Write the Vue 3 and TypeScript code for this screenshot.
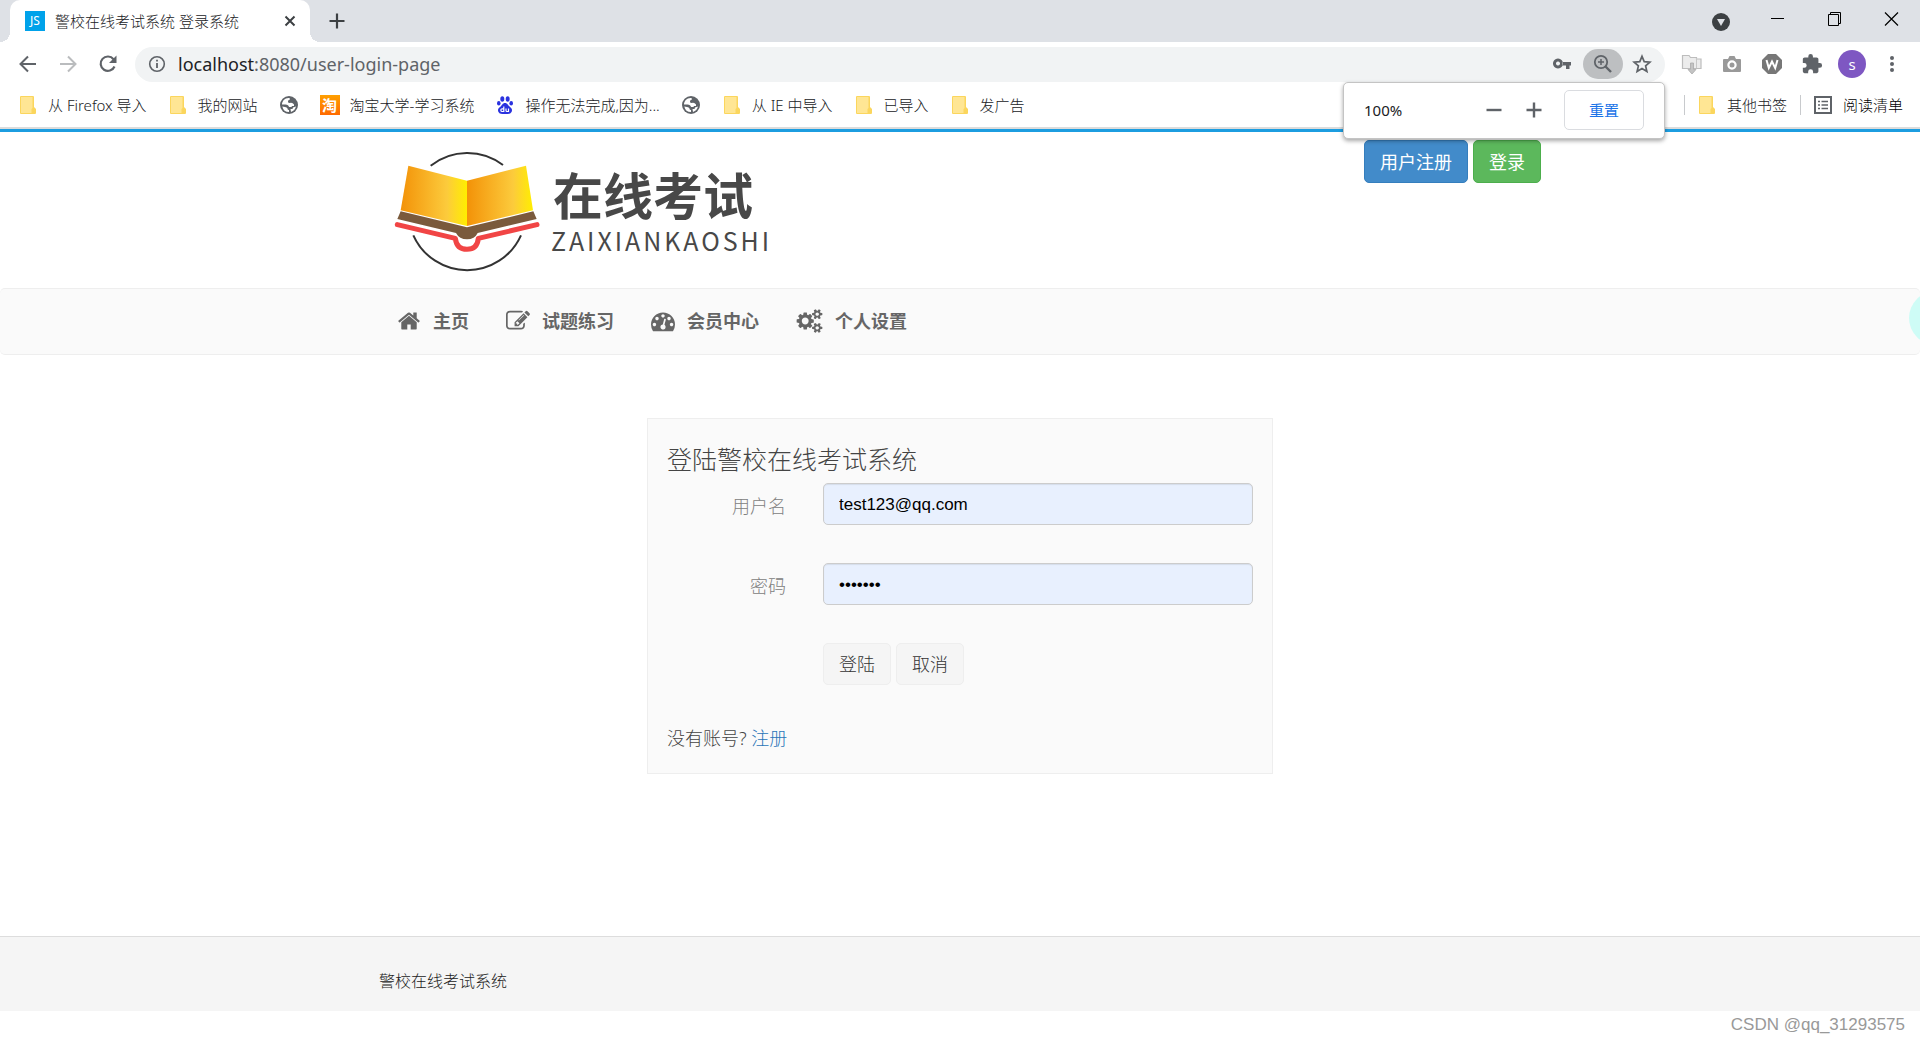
<script setup lang="ts">
import { ref } from 'vue'

interface Bookmark {
  icon: 'folder' | 'globe' | 'tao' | 'paw'
  label?: string
}

interface NavItem {
  label: string
  box: string
  width: number
  path: string
}

const bookmarks: Bookmark[] = [
  { icon: 'folder', label: '从 Firefox 导入' },
  { icon: 'folder', label: '我的网站' },
  { icon: 'globe' },
  { icon: 'tao', label: '淘宝大学-学习系统' },
  { icon: 'paw', label: '操作无法完成,因为...' },
  { icon: 'globe' },
  { icon: 'folder', label: '从 IE 中导入' },
  { icon: 'folder', label: '已导入' },
  { icon: 'folder', label: '发广告' },
]

const navItems: NavItem[] = [
  {
    label: '主页',
    box: '0 0 1792 1792',
    width: 24,
    path: 'M1472 992v480q0 26-19 45t-45 19h-384v-384h-256v384h-384q-26 0-45-19t-19-45v-480q0-1 .5-3t.5-3l575-474 575 474q1 2 1 6zm223-69l-62 74q-8 9-21 11h-3q-13 0-21-7l-692-577-692 577q-12 8-24 7-13-2-21-11l-62-74q-8-10-7-23.5t11-21.5l719-599q32-26 76-26t76 26l244 204v-195q0-14 9-23t23-9h192q14 0 23 9t9 23v408l219 182q10 8 11 21.5t-7 23.5z',
  },
  {
    label: '试题练习',
    box: '0 0 1792 1792',
    width: 24,
    path: 'M888 1184l116-116-152-152-116 116v56h96v96h56zm440-720q-16-16-33 1l-350 350q-17 17-1 33t33-1l350-350q17-17 1-33zm80 594v190q0 119-84.5 203.5t-203.5 84.5h-832q-119 0-203.5-84.5t-84.5-203.5v-832q0-119 84.5-203.5t203.5-84.5h832q63 0 117 25 15 7 18 23 3 17-9 29l-49 49q-14 14-32 8-23-6-45-6h-832q-66 0-113 47t-47 113v832q0 66 47 113t113 47h832q66 0 113-47t47-113v-126q0-13 9-22l64-64q15-15 35-7t20 29zm-96-738l288 288-672 672h-288v-288zm444 132l-92 92-288-288 92-92q28-28 68-28t68 28l152 152q28 28 28 68t-28 68z',
  },
  {
    label: '会员中心',
    box: '0 0 1792 1792',
    width: 24,
    path: 'M384 1152q0-53-37.5-90.5t-90.5-37.5-90.5 37.5-37.5 90.5 37.5 90.5 90.5 37.5 90.5-37.5 37.5-90.5zm192-448q0-53-37.5-90.5t-90.5-37.5-90.5 37.5-37.5 90.5 37.5 90.5 90.5 37.5 90.5-37.5 37.5-90.5zm428 481l101-382q6-26-7.5-48.5t-38.5-29.5-48 6.5-30 39.5l-101 382q-60 5-107 43.5t-63 98.5q-20 77 20 146t117 89 146-20 89-117q16-60-6-117t-72-91zm660-33q0-53-37.5-90.5t-90.5-37.5-90.5 37.5-37.5 90.5 37.5 90.5 90.5 37.5 90.5-37.5 37.5-90.5zm-640-640q0-53-37.5-90.5t-90.5-37.5-90.5 37.5-37.5 90.5 37.5 90.5 90.5 37.5 90.5-37.5 37.5-90.5zm448 192q0-53-37.5-90.5t-90.5-37.5-90.5 37.5-37.5 90.5 37.5 90.5 90.5 37.5 90.5-37.5 37.5-90.5zm320 448q0 261-141 483-19 29-54 29h-1402q-35 0-54-29-141-221-141-483 0-182 71-348t191-286 286-191 348-71 348 71 286 191 191 286 71 348z',
  },
  {
    label: '个人设置',
    box: '0 0 1920 1792',
    width: 27,
    path: 'M896 896q0-106-75-181t-181-75-181 75-75 181 75 181 181 75 181-75 75-181zm768 512q0-52-38-90t-90-38-90 38-38 90q0 53 37.5 90.5t90.5 37.5 90.5-37.5 37.5-90.5zm0-1024q0-52-38-90t-90-38-90 38-38 90q0 53 37.5 90.5t90.5 37.5 90.5-37.5 37.5-90.5zm-384 421v185q0 10-7 19.5t-16 10.5l-155 24q-11 35-32 76 34 48 90 115 7 10 7 20 0 12-7 19-23 30-82.5 89.5t-78.5 59.5q-11 0-21-7l-115-90q-37 19-77 31-11 108-23 155-7 24-30 24h-186q-11 0-20-7.5t-10-17.5l-23-153q-34-10-75-31l-118 89q-7 7-20 7-11 0-21-8-144-133-144-160 0-9 7-19 10-14 41-53t47-61q-23-44-35-82l-152-24q-10-1-17-9.5t-7-19.5v-185q0-10 7-19.5t16-10.5l155-24q11-35 32-76-34-48-90-115-7-11-7-20 0-12 7-20 22-30 82-89t79-59q11 0 21 7l115 90q34-18 77-32 11-108 23-154 7-24 30-24h186q11 0 20 7.5t10 17.5l23 153q34 10 75 31l118-89q8-7 20-7 11 0 21 8 144 133 144 160 0 9-7 19-12 16-42 54t-45 60q23 48 34 82l152 23q10 2 17 10.5t7 19.5zm640 533v140q0 16-149 31-12 27-30 52 51 113 51 138 0 4-4 7-122 71-124 71-8 0-46-47t-52-68q-20 2-30 2t-30-2q-14 21-52 68t-46 47q-2 0-124-71-4-3-4-7 0-25 51-138-18-25-30-52-149-15-149-31v-140q0-16 149-31 13-29 30-52-51-113-51-138 0-4 4-7 4-2 35-20t59-34 30-16q8 0 46 46.5t52 67.5q20-2 30-2t30 2q51-71 92-112l6-2q4 0 124 70 4 3 4 7 0 25-51 138 17 23 30 52 149 15 149 31zm0-1024v140q0 16-149 31-12 27-30 52 51 113 51 138 0 4-4 7-122 71-124 71-8 0-46-47t-52-68q-20 2-30 2t-30-2q-14 21-52 68t-46 47q-2 0-124-71-4-3-4-7 0-25 51-138-18-25-30-52-149-15-149-31v-140q0-16 149-31 13-29 30-52-51-113-51-138 0-4 4-7 4-2 35-20t59-34 30-16q8 0 46 46.5t52 67.5q20-2 30-2t30 2q51-71 92-112l6-2q4 0 124 70 4 3 4 7 0 25-51 138 17 23 30 52 149 15 149 31z',
  },
]

const username = ref('test123@qq.com')
const password = ref('1234567')

function reset(): void {
  username.value = ''
  password.value = ''
}
</script>

<template>
  <div class="window">
    <header class="chrome">
      <div class="tabstrip">
        <div class="tab">
          <span class="favicon">JS</span>
          <span class="tab-title">警校在线考试系统 登录系统</span>
          <button class="plain" type="button" aria-label="关闭标签页">
            <svg width="20" height="20" viewBox="0 0 20 20"><path d="M5.500 5.500l9 9m0-9l-9 9" stroke="#3c4043" stroke-width="2" fill="none" /></svg>
          </button>
        </div>
        <button class="plain new-tab" type="button" aria-label="新标签页">
          <svg width="20" height="20" viewBox="0 0 20 20"><path d="M10 2.500v15M2.500 10h15" stroke="#3c4043" stroke-width="2.200" fill="none" /></svg>
        </button>
        <div class="window-controls">
          <button class="plain" type="button" aria-label="搜索标签页">
            <svg width="20" height="20" viewBox="0 0 20 20"><circle cx="10" cy="11" r="9" fill="#3c4043" /><path d="M6 8h8l-4 7z" fill="#dee1e6" /></svg>
          </button>
          <button class="plain" type="button" aria-label="最小化">
            <svg width="20" height="20" viewBox="0 0 20 20"><path d="M3 7.500h13" stroke="#000" fill="none" /></svg>
          </button>
          <button class="plain" type="button" aria-label="还原">
            <svg width="20" height="20" viewBox="0 0 20 20"><path d="M3.500 3.500h10v11h-10zM5.500 3.500v-2h10v11h-2" stroke="#000" fill="none" /></svg>
          </button>
          <button class="plain" type="button" aria-label="关闭">
            <svg width="20" height="20" viewBox="0 0 20 20"><path d="M3 1.500l13 13M16 1.500L3 14.500" stroke="#000" stroke-width="1.200" fill="none" /></svg>
          </button>
        </div>
      </div>

      <div class="toolbar">
        <div class="history">
          <button class="plain" type="button" aria-label="后退">
            <svg width="20" height="20" viewBox="0 0 20 20"><path d="M18 10H3M10 2.500L2.500 10l7.500 7.500" stroke="#5f6368" stroke-width="2" fill="none" /></svg>
          </button>
          <button class="plain" type="button" aria-label="前进">
            <svg width="20" height="20" viewBox="0 0 20 20"><path d="M2 10h15M10 2.500l7.500 7.500-7.500 7.500" stroke="#babcbe" stroke-width="2" fill="none" /></svg>
          </button>
          <button class="plain" type="button" aria-label="重新加载">
            <svg width="20" height="20" viewBox="0 0 20 20"><path d="M16.500 12.500A7.200 7.200 0 1 1 15.500 5.200" stroke="#5f6368" stroke-width="2.200" fill="none" /><path d="M18.500 1.500v7.500H11z" fill="#5f6368" /></svg>
          </button>
        </div>
        <div class="omnibox">
          <svg width="18" height="18" viewBox="0 0 18 18"><circle cx="9" cy="9" r="7.300" fill="none" stroke="#5f6368" stroke-width="1.600" /><path d="M9 8v5M9 4.800v1.800" stroke="#5f6368" stroke-width="1.800" /></svg>
          <span class="url"><b>localhost</b>:8080/user-login-page</span>
          <button class="plain" type="button" aria-label="密码">
            <svg width="20" height="20" viewBox="0 0 20 20"><path fill="#5f6368" fill-rule="evenodd" d="M6 4.500a5 5 0 1 1-.01 0zM6 7.500a2 2 0 1 0 .01 0zM10.500 8H19v3.500h-1.500V15h-3.500v-3.500h-3.500z" /></svg>
          </button>
          <button class="plain zoom" type="button" aria-label="缩放">
            <svg width="22" height="22" viewBox="0 0 22 22"><g fill="none" stroke="#5f6368"><circle cx="9" cy="9" r="6.200" stroke-width="1.800" /><path d="M9 6v6M6 9h6" stroke-width="1.500" /><path d="M13.500 13.500l5.500 5.500" stroke-width="2.400" /></g></svg>
          </button>
          <button class="plain" type="button" aria-label="收藏">
            <svg width="20" height="20" viewBox="0 0 20 20"><path d="M10 2.300l2.200 5.300 5.700.5-4.300 3.800 1.300 5.600-4.900-3-4.900 3 1.300-5.600L2.100 8.100l5.700-.5z" fill="none" stroke="#5f6368" stroke-width="1.700" /></svg>
          </button>
        </div>
        <div class="extensions">
          <button class="plain" type="button" aria-label="下载">
            <svg width="22" height="22" viewBox="0 0 22 22"><path d="M1.500 15.500V2.500H8l1.500 2h6V6H20v9.500z" fill="#ececec" stroke="#bdbdbd" stroke-width="1.200" /><path d="M15.500 5v10" stroke="#c8c8c8" /><path d="M9.500 10h3v6.500H15L11 21l-4-4.500h2.500z" fill="#c4c4c4" stroke="#ababab" stroke-width=".8" /></svg>
          </button>
          <button class="plain" type="button" aria-label="截图">
            <svg width="20" height="20" viewBox="0 0 20 20"><path d="M2 5h4l1.500-3h5L14 5h4q1 0 1 1v11q0 1-1 1H2q-1 0-1-1V6q0-1 1-1z" fill="#999" /><circle cx="10" cy="11" r="3.600" fill="#999" stroke="#fff" stroke-width="2.200" /></svg>
          </button>
          <button class="plain" type="button" aria-label="W">
            <svg width="22" height="22" viewBox="0 0 22 22"><path d="M7 1h8l6 6v8l-6 6H7l-6-6V7z" fill="#777" /><path d="M5.500 7l2.300 8L11 8.500 14.200 15l2.300-8" fill="none" stroke="#fff" stroke-width="2" /></svg>
          </button>
          <button class="plain" type="button" aria-label="扩展程序">
            <svg width="22" height="22" viewBox="0 0 24 24"><path fill="#5f6368" d="M20.500 11H19V7c0-1.100-.9-2-2-2h-4V3.500a2.500 2.500 0 0 0-5 0V5H4c-1.100 0-2 .9-2 2v3.800h1.500a2.700 2.700 0 0 1 0 5.400H2V20c0 1.100.9 2 2 2h3.800v-1.500a2.700 2.700 0 0 1 5.400 0V22H17c1.100 0 2-.9 2-2v-4h1.500a2.500 2.500 0 0 0 0-5z" /></svg>
          </button>
          <button class="avatar" type="button">s</button>
          <button class="plain" type="button" aria-label="菜单">
            <svg width="20" height="20" viewBox="0 0 20 20" fill="#5f6368"><circle cx="10" cy="4" r="2" /><circle cx="10" cy="10" r="2" /><circle cx="10" cy="16" r="2" /></svg>
          </button>
        </div>
      </div>

      <nav class="bookmarks">
        <a v-for="(mark, i) in bookmarks" :key="i" class="bookmark" href="#" :aria-label="mark.label ?? '网站'">
          <svg v-if="mark.icon === 'folder'" width="20" height="20" viewBox="0 0 20 20"><path d="M3 1h12q1 0 1 1v10l2 2v4q0 1-1 1H3q-1 0-1-1V2q0-1 1-1z" fill="#fbd65d" /><path d="M3 2h11.500v11l-1 1v4H3z" fill="#ffe694" /></svg>
          <svg v-else-if="mark.icon === 'globe'" width="20" height="20" viewBox="0 0 20 20"><circle cx="10" cy="10" r="9" fill="#5f6368" /><path d="M10.500 3C6 2.500 3 6 3 9.500h3.500q3 0 3.500 2.500h2q1 0 1-1h2V9.500q-1.500-2.500-4.500-1.500-2 0-1.500-2 .5-1.500 2-1.500z" fill="#fff" /><path d="M3.300 11.500Q4.500 17 10 17v-2q-1.500 0-1.500-1.500-.5-1.500-2.500-1.500zM12 17q4-1.500 5-5.500l-3 1-.5 1.500h-2z" fill="#fff" /></svg>
          <span v-else-if="mark.icon === 'tao'" class="tao">淘</span>
          <svg v-else width="20" height="20" viewBox="0 0 20 20" fill="#2a32df"><ellipse cx="7.300" cy="4" rx="2" ry="2.800" /><ellipse cx="12.700" cy="4" rx="2" ry="2.800" /><ellipse cx="3.800" cy="8.200" rx="1.800" ry="2.300" /><ellipse cx="16.200" cy="8.200" rx="1.800" ry="2.300" /><path d="M10 8c2.500 0 3 2.500 5 4s2.500 3 1.500 5-3 2-6.500 2-5.500 0-6.500-2-.5-3.500 1.500-5S7.500 8 10 8z" /><path d="M8.800 11.500v5H7.200a1.300 1.300 0 0 1 0-2.700h1.600M11 13.500v2q0 1 1 1h1.500v-3" fill="none" stroke="#fff" stroke-width="1.200" /></svg>
          <span v-if="mark.label">{{ mark.label }}</span>
        </a>
        <div class="bookmarks-right">
          <a class="bookmark" href="#">
            <svg width="20" height="20" viewBox="0 0 20 20"><path d="M3 1h12q1 0 1 1v10l2 2v4q0 1-1 1H3q-1 0-1-1V2q0-1 1-1z" fill="#fbd65d" /><path d="M3 2h11.500v11l-1 1v4H3z" fill="#ffe694" /></svg>
            <span>其他书签</span>
          </a>
          <a class="bookmark dark" href="#">
            <svg width="20" height="20" viewBox="0 0 20 20"><path d="M2 2h16v16H2z" fill="none" stroke="#5f6368" stroke-width="2" /><path d="M5 6.500h2M5 10h2M5 13.500h2M8.500 6.500H15M8.500 10H15M8.500 13.500H15" stroke="#5f6368" stroke-width="1.600" /></svg>
            <span>阅读清单</span>
          </a>
        </div>
      </nav>

      <div class="zoom-bubble">
        <span class="zoom-value">100%</span>
        <button class="plain" type="button" aria-label="缩小">
          <svg width="20" height="20" viewBox="0 0 20 20"><path d="M2.500 10h15" stroke="#5f6368" stroke-width="2.400" /></svg>
        </button>
        <button class="plain" type="button" aria-label="放大">
          <svg width="20" height="20" viewBox="0 0 20 20"><path d="M2.500 10h15M10 2.500v15" stroke="#5f6368" stroke-width="2.400" /></svg>
        </button>
        <button class="zoom-reset" type="button">重置</button>
      </div>
    </header>

    <div class="page">
      <div class="banner">
        <div class="container banner-row">
          <a class="logo" href="#" aria-label="在线考试">
            <svg width="147" height="123" viewBox="72 30 441 369">
              <defs>
                <linearGradient id="leaf"><stop offset="0" stop-color="#f39208" /><stop offset=".7" stop-color="#fccb3c" /><stop offset="1" stop-color="#ffee00" /></linearGradient>
              </defs>
              <g fill="none" stroke="#333" stroke-width="6"><path d="M182 77A177 177 0 0 1 399 75" /><path d="M130 286A177 177 0 0 0 453 286" /></g>
              <path d="M115 77L291 122V258L92 211z" fill="url(#leaf)" />
              <path d="M468 77L291 122V258L489 211z" fill="url(#leaf)" />
              <path d="M92 214L291 262 490 214 500 237 323 279Q314 298 291 298T258 279L82 237z" fill="#7a5a3c" />
              <path d="M82 254L256 295Q260 328 291 328T325 295L501 254" fill="none" stroke="#f14545" stroke-width="15" stroke-linecap="round" stroke-linejoin="round" />
            </svg>
            <span class="logo-text">
              <span class="logo-cn">在线考试</span>
              <span class="logo-en">ZAIXIANKAOSHI</span>
            </span>
          </a>
          <div class="account">
            <button class="btn btn-primary" type="button">用户注册</button>
            <button class="btn btn-success" type="button">登录</button>
          </div>
        </div>
      </div>

      <nav class="main-nav">
        <div class="container nav-row">
          <a v-for="item in navItems" :key="item.label" class="nav-link" href="#">
            <svg :width="item.width" height="24" :viewBox="item.box" fill="currentColor"><path :d="item.path" /></svg>
            <span>{{ item.label }}</span>
          </a>
        </div>
        <span class="float-ball"></span>
      </nav>

      <main class="content">
        <form class="panel" @submit.prevent>
          <h1>登陆警校在线考试系统</h1>
          <div class="field">
            <label for="username">用户名</label>
            <input id="username" v-model="username" type="text" />
          </div>
          <div class="field">
            <label for="password">密码</label>
            <input id="password" v-model="password" type="password" />
          </div>
          <div class="field">
            <div class="buttons">
              <button class="btn btn-default" type="submit">登陆</button>
              <button class="btn btn-default" type="button" @click="reset">取消</button>
            </div>
          </div>
          <p class="hint">没有账号? <a href="#">注册</a></p>
        </form>
      </main>

      <footer class="footer">
        <div class="container">警校在线考试系统</div>
      </footer>
      <div class="watermark">CSDN @qq_31293575</div>
    </div>
  </div>
</template>

<style>
body {
  margin: 0;
  background: #fff;
}
</style>

<style scoped>
* {
  box-sizing: border-box;
}

.window {
  overflow: hidden;
  font-family: "Noto Sans", "Noto Sans CJK SC", sans-serif;
  font-size: 18px;
  font-weight: 300;
  line-height: 26px;
  color: #444;
}

svg {
  display: block;
  flex: none;
}

a {
  color: inherit;
  text-decoration: none;
}

button {
  font: inherit;
  color: inherit;
  cursor: pointer;
}

.plain {
  display: flex;
  align-items: center;
  justify-content: center;
  padding: 0;
  border: 0;
  background: none;
}

/* Browser frame */
.chrome {
  position: relative;
  font-size: 15px;
  line-height: 20px;
  border-bottom: 2px solid #dcdcdc;
}

.tabstrip {
  display: flex;
  align-items: center;
  height: 42px;
  padding-left: 10px;
  background: #dee1e6;
}

.tab {
  position: relative;
  display: flex;
  align-items: center;
  width: 300px;
  height: 42px;
  padding: 0 10px 0 15px;
  border-radius: 10px 10px 0 0;
  background: #fff;
}

.tab::before,
.tab::after {
  content: "";
  position: absolute;
  bottom: 0;
  width: 10px;
  height: 10px;
}

.tab::before {
  right: 100%;
  background: radial-gradient(circle at 0 0, transparent 10px, #fff 10px);
}

.tab::after {
  left: 100%;
  background: radial-gradient(circle at 100% 0, transparent 10px, #fff 10px);
}

.favicon {
  width: 20px;
  height: 20px;
  margin-right: 10px;
  background: #00a2ea;
  color: #fff;
  font-size: 12px;
  font-weight: 400;
  text-align: center;
}

.tab-title {
  flex: 1;
  color: #202124;
  white-space: nowrap;
}

.new-tab {
  margin-left: 17px;
}

.window-controls {
  display: flex;
  gap: 37px;
  margin-left: auto;
  padding-right: 18px;
}

.toolbar {
  display: flex;
  align-items: center;
  height: 44px;
  padding: 0 8px 0 18px;
}

.history {
  display: flex;
  gap: 20px;
  width: 117px;
}

.omnibox {
  display: flex;
  flex: 1;
  align-items: center;
  height: 35px;
  padding: 0 13px;
  border-radius: 18px;
  background: #f1f3f4;
}

.url {
  flex: 1;
  margin-left: 12px;
  font-size: 18px;
  font-weight: 400;
  color: #5f6368;
}

.url b {
  font-weight: 400;
  color: #202124;
}

.zoom {
  width: 40px;
  height: 30px;
  margin: 0 9px 0 11px;
  border-radius: 15px;
  background: #bdbfc1;
}

.extensions {
  display: grid;
  grid-template-columns: repeat(6, 40px);
  align-items: center;
  justify-items: center;
  margin-left: 7px;
}

.avatar {
  width: 28px;
  height: 28px;
  padding: 0;
  border: 0;
  border-radius: 50%;
  background: #7e57c2;
  color: #fff;
  font-weight: 400;
}

.bookmarks {
  display: flex;
  align-items: center;
  gap: 21px;
  height: 41px;
  padding: 0 17px 3px 18px;
  color: #202124;
  white-space: nowrap;
}

.bookmark {
  display: flex;
  align-items: center;
  gap: 10px;
}

.tao {
  width: 20px;
  height: 20px;
  background: linear-gradient(#ffa000, #ff6a00);
  color: #fff;
  font-weight: 700;
  text-align: center;
}

.bookmarks-right {
  display: flex;
  margin-left: auto;
}

.bookmarks-right .bookmark {
  padding-left: 12px;
  border-left: 1px solid #c8cacd;
}

.bookmarks-right .bookmark + .bookmark {
  margin-left: 13px;
}

.dark {
  color: #000;
}

.zoom-bubble {
  position: absolute;
  top: 82px;
  right: 255px;
  z-index: 2;
  display: flex;
  align-items: center;
  gap: 20px;
  width: 322px;
  height: 57px;
  padding: 0 20px 2px;
  border: 1px solid #c4c4c4;
  border-radius: 5px;
  background: #fff;
  box-shadow: 0 2px 4px rgba(0, 0, 0, 0.35);
  color: #202124;
}

.zoom-value {
  flex: 1;
  font-weight: 400;
}

.zoom-reset {
  width: 80px;
  height: 40px;
  padding: 0;
  border: 1px solid #dadce0;
  border-radius: 5px;
  background: #fff;
  color: #1a73e8;
  font-weight: 400;
}

/* Site */
.container {
  width: 100%;
  max-width: 1162px;
  margin: 0 auto;
}

.banner {
  border-top: 3px solid #1c9de0;
}

.banner-row {
  display: flex;
  align-items: flex-start;
  justify-content: space-between;
}

.logo {
  display: flex;
  gap: 10px;
  padding: 18px 0 15px 15px;
  color: #484848;
}

.logo-text {
  display: flex;
  flex-direction: column;
  padding-top: 20px;
}

.logo-cn {
  padding-left: 2px;
  font-size: 50px;
  font-weight: 700;
  line-height: 52px;
}

.logo-en {
  font-family: "Noto Sans CJK SC", sans-serif;
  font-size: 25px;
  font-weight: 400;
  line-height: 36px;
  letter-spacing: 3px;
}

.account {
  display: flex;
  gap: 5px;
  padding-top: 8px;
}

.btn {
  height: 43px;
  padding: 0 15px;
  border: 1px solid transparent;
  border-radius: 5px;
}

.btn-primary {
  border-color: #357ebd;
  background: #428bca;
  color: #fff;
  font-weight: 400;
}

.btn-success {
  border-color: #4cae4c;
  background: #5cb85c;
  color: #fff;
  font-weight: 400;
}

.btn-default {
  height: 42px;
  border-color: #eee;
  background: #f5f5f5;
  color: #333;
}

.main-nav {
  position: relative;
  border: solid #eee;
  border-width: 1px 0;
  border-radius: 5px;
  background: #fafafa;
}

.nav-row {
  display: flex;
  gap: 37px;
  padding-left: 18px;
}

.nav-link {
  display: flex;
  align-items: center;
  gap: 12px;
  height: 65px;
  padding-bottom: 1px;
  font-weight: 700;
  color: #666;
}

.float-ball {
  position: absolute;
  top: 2px;
  right: -43px;
  width: 54px;
  height: 54px;
  border-radius: 50%;
  background: #cefcf6;
}

.content {
  padding: 63px 0 162px;
}

.panel {
  max-width: 626px;
  margin: 0 auto;
  padding: 23px 19px 20px;
  border: 1px solid #eee;
  background: #fafafa;
}

.panel h1 {
  margin: 0 0 7px;
  font-size: 25px;
  font-weight: 300;
  line-height: 34px;
}

.field {
  display: grid;
  grid-template-columns: 119px 1fr;
  gap: 37px;
  align-items: center;
  margin-bottom: 38px;
}

.field label {
  padding-top: 4px;
  color: #808080;
  text-align: right;
}

.field input {
  width: 100%;
  height: 42px;
  padding: 2px 15px 0;
  border: 1px solid #ccc;
  border-radius: 5px;
  background: #e8f0fe;
  box-shadow: inset 0 1px 1px rgba(0, 0, 0, 0.08);
  color: #000;
  font-family: "Liberation Sans", sans-serif;
  font-size: 17px;
}

.buttons {
  display: flex;
  grid-column: 2;
  gap: 5px;
}

.hint {
  margin: 0;
  padding: 2px 0;
}

.hint a {
  color: #2a75b8;
}

.footer {
  padding: 31px 0 17px;
  border-top: 1px solid #ddd;
  background: #f5f5f5;
  font-size: 16px;
  color: #222;
}

.watermark {
  padding: 1px 15px 4px 0;
  font-family: "Liberation Sans", sans-serif;
  font-size: 17px;
  text-align: right;
  color: #999;
}
</style>
